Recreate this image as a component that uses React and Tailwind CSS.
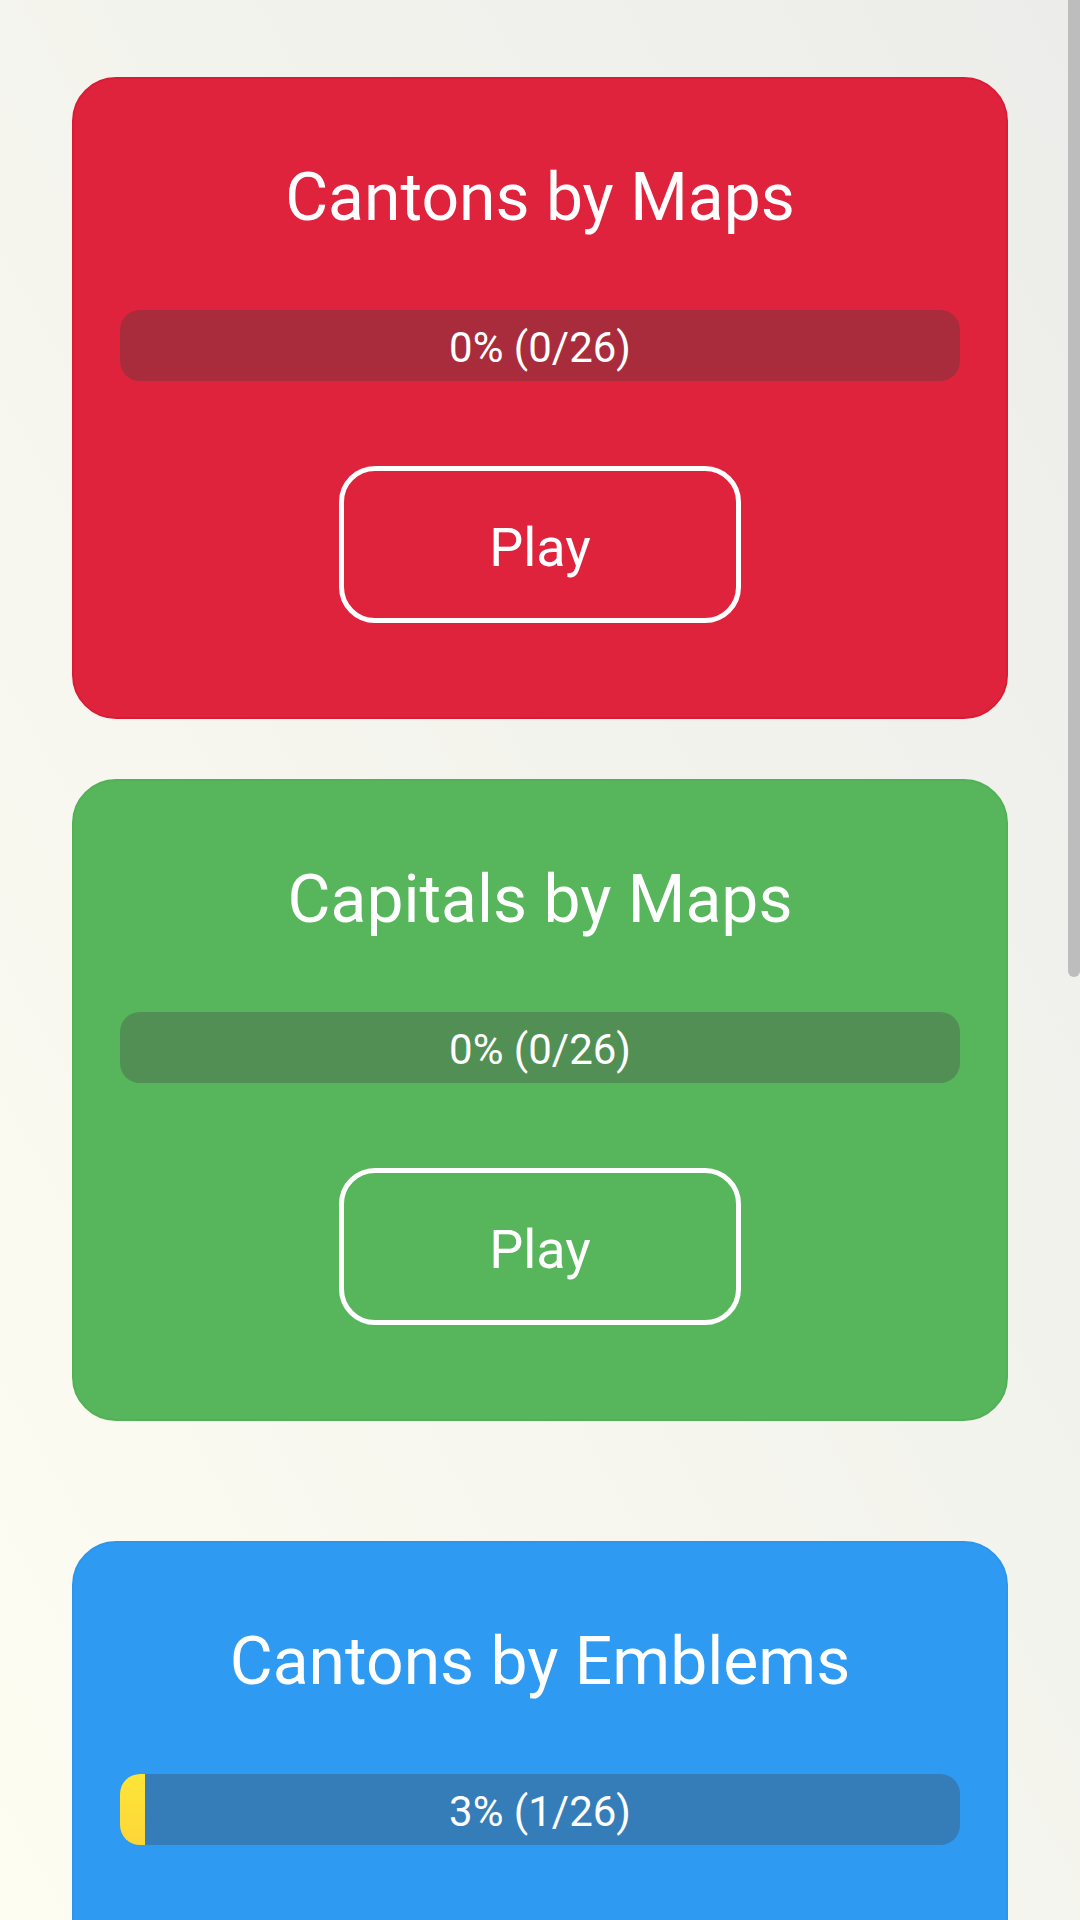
import React from "react";

const MODES = [
  {
    title: "Cantons by Maps",
    done: 0,
    total: 26,
    card: "bg-[#e0233d] border-[#d91c36]",
    bar: "bg-[#a92c3c]",
  },
  {
    title: "Capitals by Maps",
    done: 0,
    total: 26,
    card: "bg-[#57b55b] border-[#52b056]",
    bar: "bg-[#518f55]",
  },
  {
    title: "Cantons by Emblems",
    done: 1,
    total: 26,
    card: "bg-[#2f9af2] border-[#2c96ee]",
    bar: "bg-[#357db8]",
    spaced: true,
  },
];

const ModeCard = ({ mode }) => {
  const percent = Math.floor((mode.done / mode.total) * 100);

  return (
    <div
      className={`flex flex-col items-center rounded-[44px] border-2 px-[46px] pt-[81px] pb-[94px] ${mode.card} ${
        mode.spaced ? "mt-[60px]" : ""
      }`}
    >
      <h2 className="text-[66px] leading-[76px] font-normal text-white">{mode.title}</h2>

      <div
        className={`relative mt-[74px] flex h-[71px] w-full items-center justify-center overflow-hidden rounded-[20px] ${mode.bar}`}
      >
        {percent > 0 && (
          <div
            className="absolute left-0 top-0 h-full bg-gradient-to-b from-[#fde538] to-[#fdd638]"
            style={{ width: `${percent}%` }}
          ></div>
        )}
        <span className="relative pt-[3px] text-[42px] leading-[49px] text-white">
          {percent}% ({mode.done}/{mode.total})
        </span>
      </div>

      <button className="mt-[85px] flex h-[157px] w-[402px] items-center justify-center rounded-[36px] border-[5px] border-white pt-[6px] text-[54px] leading-[63px] text-white">
        Play
      </button>
    </div>
  );
};

const App = () => {
  return (
    <div className="relative h-screen overflow-hidden bg-gradient-to-bl from-[#ececea] to-[#fdfdf2] font-['Roboto',sans-serif]">
      <div className="flex flex-col gap-[60px] px-[72px] pt-[77px]">
        {MODES.map((mode, index) => (
          <ModeCard key={index} mode={mode} />
        ))}
      </div>
      <div className="absolute right-0 top-0 h-[977px] w-[12px] rounded-b-[6px] bg-[#bdbdbd]"></div>
    </div>
  );
};

export default App;
